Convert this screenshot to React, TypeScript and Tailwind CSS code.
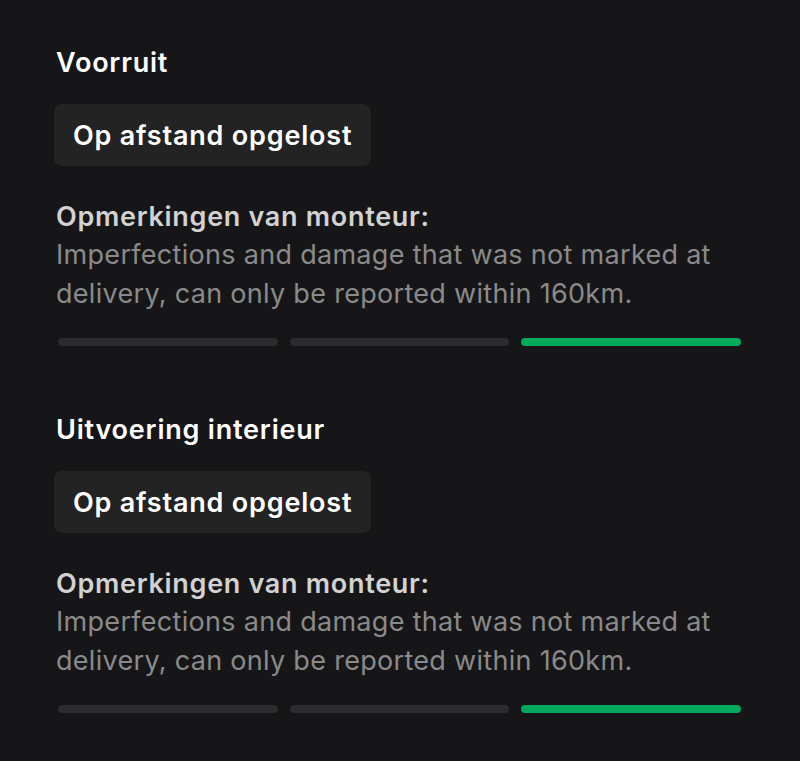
import React from "react";

function Section({ title }: { title: string }) {
  return (
    <div className="flex flex-col">
      <div className="text-[27px] leading-[32px] font-semibold text-white tracking-[0.8px]">{title}</div>
      <div className="mt-[25px] -ml-[2px]">
        <div className="inline-flex items-center h-[62px] px-[19px] pt-[2px] rounded-[8px] bg-[#232323] text-[27px] font-semibold text-white tracking-[0.8px]">
          Op afstand opgelost
        </div>
      </div>
      <div className="mt-[33px] text-[27px] leading-[36px] font-semibold text-[#d2d2d2] tracking-[0.7px]">
        Opmerkingen van monteur:
      </div>
      <div className="text-[27px] leading-[39px] text-[#8a8a8a] tracking-[0.3px] pr-[20px]">
        Imperfections and damage that was not marked at delivery, can only be reported within 160km.
      </div>
      <div className="mt-[25px] ml-[2px] mr-[2px] grid grid-cols-3 gap-[12px]">
        <div className="h-[8px] rounded-full bg-[#2c2c2e]" />
        <div className="h-[8px] rounded-full bg-[#2c2c2e]" />
        <div className="h-[8px] rounded-full bg-[#00a95c]" />
      </div>
    </div>
  );
}

export default function App() {
  return (
    <div
      className="w-[800px] h-[761px] bg-[#161618] pl-[56px] pr-[57px] pt-[47px] flex flex-col gap-[68px]"
      style={{ fontFamily: "Inter, 'Noto Sans', sans-serif" }}
    >
      <Section title="Voorruit" />
      <Section title="Uitvoering interieur" />
    </div>
  );
}
